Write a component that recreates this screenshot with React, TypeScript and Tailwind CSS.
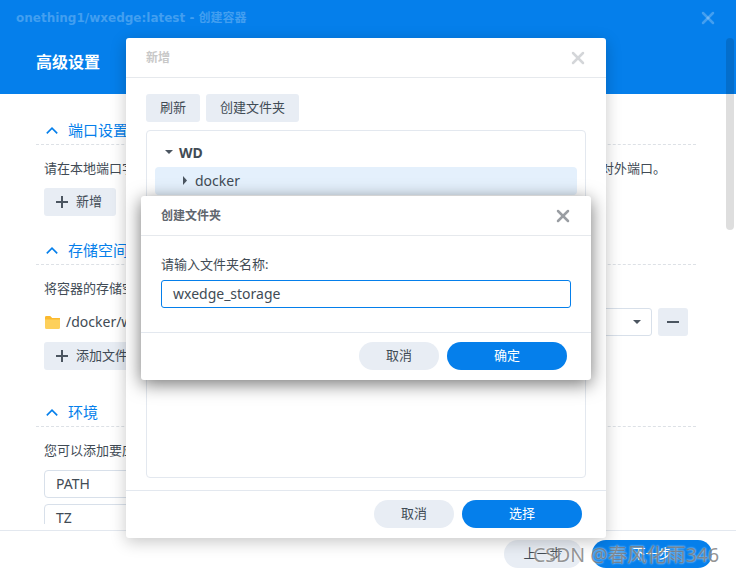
import { X } from "lucide-react";

const Chevron = () => (
    <svg width="12" height="7" viewBox="0 0 12 7" fill="none" stroke="#057feb" strokeWidth="1.6" className="ml-2.5 mr-2.5">
        <path d="M0.8 6.4 L6 1.2 L11.2 6.4" />
    </svg>
);

const Section = ({ title }: { title: string }) => (
    <div className="flex items-center h-[25px] pb-1 border-b border-dashed border-[#dde1e6] text-[15px] text-[#057feb]">
        <Chevron />
        <span>{title}</span>
    </div>
);

const Caret = ({ className }: { className?: string }) => (
    <svg width="8" height="4" viewBox="0 0 8 4" fill="#4b5560" className={className}>
        <path d="M0 0 H8 L4 4 Z" />
    </svg>
);

const PlusIcon = () => (
    <svg width="12" height="12" viewBox="0 0 12 12" stroke="#4b5560" strokeWidth="2" fill="none">
        <path d="M6 0 V12 M0 6 H12" />
    </svg>
);

const GrayButton = ({ label, className }: { label: string; className: string }) => (
    <button className={`h-7 bg-[#e8edf4] text-[13px] text-[#414b55] flex items-center justify-center ${className}`}>{label}</button>
);

const BlueButton = ({ label, className }: { label: string; className: string }) => (
    <button className={`h-7 bg-[#057feb] rounded-full text-[13px] text-white flex items-center justify-center ${className}`}>{label}</button>
);

export default function App() {
    return (
        <div className="relative w-[736px] h-[574px] overflow-hidden flex flex-col bg-white text-[#414b55] font-['Noto_Sans','Noto_Sans_CJK_SC',sans-serif]">
            <header className="h-[94px] bg-[#057feb] flex flex-col shrink-0">
                <div className="h-9 flex items-center justify-between pl-4 pr-[18px] text-[12px] font-bold text-white/25">
                    <span className="font-['DejaVu_Sans','Noto_Sans_CJK_SC',sans-serif]">onething1/wxedge:latest - 创建容器</span>
                    <X size={20} strokeWidth={3} />
                </div>
                <div className="pl-9 pt-[15px] text-[16px] font-bold leading-[22px] text-white">高级设置</div>
            </header>

            <main className="h-[430px] shrink-0 overflow-hidden pt-[26px] pl-9 pr-10">
                <Section title="端口设置" />
                <div className="mt-[13px] px-2 h-5 flex justify-between text-[13px] leading-5 pr-[30px]">
                    <span>请在本地端口字段中</span>
                    <span>对外端口。</span>
                </div>
                <button className="mt-2.5 ml-2 w-[72px] h-7 pl-3 bg-[#e8edf4] rounded-[3px] text-[13px] flex items-center gap-2">
                    <PlusIcon />新增
                </button>

                <div className="mt-6"><Section title="存储空间" /></div>
                <div className="mt-[13px] px-2 h-5 text-[13px] leading-5">将容器的存储空间</div>
                <div className="mt-2.5 ml-2 flex items-center h-7 gap-1.5">
                    <svg width="15" height="13" viewBox="0 0 15 13" className="ml-px">
                        <path d="M0 1.5 Q0 0 1.5 0 H5 L7 2 H13.5 Q15 2 15 3.5 V11.5 Q15 13 13.5 13 H1.5 Q0 13 0 11.5 Z" fill="#fdd05b" />
                        <path d="M0 1.5 Q0 0 1.5 0 H5 L7 2 H15 V3.5 H0 Z" fill="#fbb92e" />
                    </svg>
                    <span className="text-[14px] pb-0.5">/docker/wxedge</span>
                    <div className="ml-auto w-[200px] h-7 border border-[#d8e0ea] rounded-[3px] flex items-center justify-end pr-[10px]">
                        <Caret />
                    </div>
                    <div className="mr-2 w-[30px] h-7 bg-[#e8edf4] rounded-[3px] flex items-center justify-center">
                        <span className="w-3 h-0.5 bg-[#4b5560]" />
                    </div>
                </div>
                <button className="mt-1.5 ml-2 w-[120px] h-7 pl-3 bg-[#e8edf4] rounded-[3px] text-[13px] flex items-center gap-2">
                    <PlusIcon />添加文件夹
                </button>

                <div className="mt-8"><Section title="环境" /></div>
                <div className="mt-[13px] px-2 h-5 text-[13px] leading-5">您可以添加要应用</div>
                <div className="mt-2.5 ml-2 w-[200px] h-7 border border-[#d8e0ea] rounded-[4px] pl-[11px] pb-0.5 text-[14px] flex items-center">PATH</div>
                <div className="mt-1.5 ml-2 w-[200px] h-7 border border-[#d8e0ea] rounded-[4px] pl-[11px] pb-0.5 text-[14px] flex items-center">TZ</div>
            </main>

            <footer className="mt-1.5 flex-1 border-t border-[#e3e8ef] flex justify-end gap-2.5 pt-[9px] pr-6">
                <GrayButton label="上一步" className="w-[78px] rounded-full" />
                <BlueButton label="下一步" className="w-[120px]" />
            </footer>

            <div className="absolute right-0.5 top-[38px] w-2 h-[192px] rounded-full bg-black/[0.13]" />

            {/* file picker */}
            <div className="absolute left-[126px] top-[38px] w-[480px] h-[500px] bg-white rounded-[3px] flex flex-col shadow-[0_4px_16px_rgba(0,0,0,0.22)]">
                <div className="h-10 shrink-0 border-b border-[#e6e9ed] flex items-center justify-between pl-5 pr-[18px] text-[12px] font-bold text-[#c8c8c8]">
                    <span>新增</span>
                    <X size={20} strokeWidth={3} className="text-[#d4d6d9]" />
                </div>
                <div className="flex gap-1.5 px-5 pt-4">
                    <GrayButton label="刷新" className="w-[54px] rounded-[3px]" />
                    <GrayButton label="创建文件夹" className="w-[93px] rounded-[3px]" />
                </div>
                <div className="mx-5 mt-2 h-[348px] border border-[#e3e8ef] rounded-[4px] px-2 pt-2">
                    <div className="h-7 flex items-center pl-2.5 gap-1.5 pb-0.5 text-[14px] font-bold">
                        <Caret />
                        WD
                    </div>
                    <div className="h-7 bg-[#e4f0fc] rounded-[4px] flex items-center pl-7 gap-2 pb-0.5 text-[14px]">
                        <svg width="4" height="9" viewBox="0 0 4 9" fill="#4b5560"><path d="M0 0 L4 4.5 L0 9 Z" /></svg>
                        docker
                    </div>
                </div>
                <div className="mt-3 flex-1 border-t border-[#e3e8ef] flex justify-end gap-2 pt-[9px] pr-6">
                    <GrayButton label="取消" className="w-20 rounded-full" />
                    <BlueButton label="选择" className="w-[120px]" />
                </div>
            </div>

            {/* new folder dialog */}
            <div className="absolute left-[141px] top-[196px] w-[450px] h-[184px] bg-white rounded-[3px] flex flex-col shadow-[0_4px_18px_rgba(0,0,0,0.55)]">
                <div className="h-10 shrink-0 border-b border-[#e6e9ed] flex items-center justify-between pl-5 pr-[18px] text-[12px] font-bold text-[#5f666e]">
                    <span>创建文件夹</span>
                    <X size={20} strokeWidth={3} className="text-[#9a9ea3]" />
                </div>
                <div className="h-[96px] shrink-0 px-5 pt-[18px]">
                    <div className="text-[13px] leading-5">请输入文件夹名称:</div>
                    <div className="mt-1.5 h-7 border border-[#057feb] rounded-[3px] pl-[11px] pb-0.5 text-[14px] flex items-center">wxedge_storage</div>
                </div>
                <div className="flex-1 border-t border-[#e3e8ef] flex justify-end gap-2 pt-[9px] pr-6">
                    <GrayButton label="取消" className="w-20 rounded-full" />
                    <BlueButton label="确定" className="w-[120px]" />
                </div>
            </div>

            <div className="absolute left-[533px] top-[542px] text-[19.5px] leading-[26px] text-[#666]/70 [text-shadow:0_0_2px_rgba(255,255,255,0.9)]">CSDN @春风化雨346</div>
        </div>
    );
}
